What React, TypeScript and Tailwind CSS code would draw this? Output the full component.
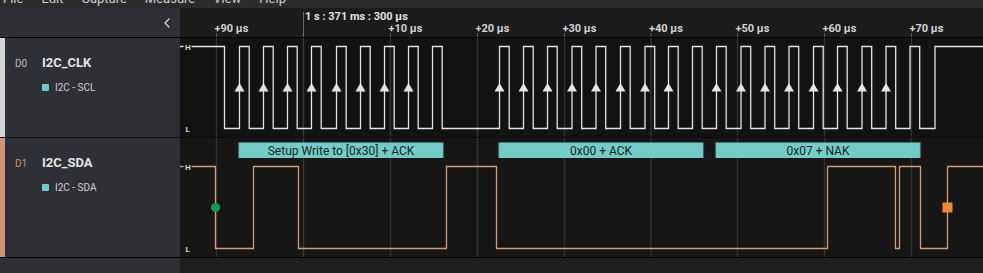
import { ChevronLeft } from "lucide-react";

const GRID = [216.5, 303.5, 390.5, 477.5, 564.5, 651, 737.5, 824.5, 911.5];

const TICKS = [
  { x: 216.5, label: "+90 µs" },
  { x: 390.5, label: "+10 µs" },
  { x: 477.5, label: "+20 µs" },
  { x: 564.5, label: "+30 µs" },
  { x: 651, label: "+40 µs" },
  { x: 737.5, label: "+50 µs" },
  { x: 824.5, label: "+60 µs" },
  { x: 911.5, label: "+70 µs" },
];

// rising edges of the clock, in page x
const CLK_RISE = [
  239.5, 263.5, 287.5, 311.5, 336.5, 360.5, 384.5, 408.5, 432.5,
  499.5, 523.5, 547.5, 572, 596, 620.5, 645, 668.5, 692.5,
  716.5, 741, 765, 789, 813.5, 837.5, 862, 886, 910, 935,
];
const NO_ARROW = [432.5, 692.5, 910, 935];

const CLK_HI = 46.5;
const CLK_LO = 128.5;
const SDA_HI = 166.5;
const SDA_LO = 248.5;

const clkPath = () => {
  let d = `M180 ${CLK_HI} H224.5 V${CLK_LO}`;
  CLK_RISE.forEach((x, i) => {
    d += ` H${x} V${CLK_HI}`;
    if (i < CLK_RISE.length - 1) d += ` H${x + 9.7} V${CLK_LO}`;
  });
  return d + " H983";
};

const SDA_EDGES = [215.5, 253.5, 298.5, 446.5, 496.5, 827.5, 895.5, 899.5, 920.5, 947.5];

const sdaPath = () => {
  let d = `M180 ${SDA_HI}`;
  SDA_EDGES.forEach((x, i) => {
    d += ` H${x} V${i % 2 === 0 ? SDA_LO : SDA_HI}`;
  });
  return d + " H983";
};

const ANNOTATIONS = [
  { x1: 238.5, x2: 443.5, text: "Setup Write to [0x30] + ACK" },
  { x1: 498.5, x2: 703.5, text: "0x00 + ACK" },
  { x1: 715.5, x2: 920.5, text: "0x07 + NAK" },
];

const GridLines = ({ y1, y2 }: { y1: number; y2: number }) => (
  <>
    {GRID.map((x) => (
      <line key={x} x1={x} x2={x} y1={y1} y2={y2} stroke={x === 303.5 ? "#3a3a3a" : "#313131"} strokeWidth={1.5} />
    ))}
  </>
);

const LevelLabels = ({ hi, lo, bg }: { hi: number; lo: number; bg: string }) => (
  <>
    <rect x={183.5} y={hi - 4} width={8} height={8} fill={bg} />
    <text x={185} y={hi + 3} fontSize={8} fontWeight={700} fill="#d8d8d8">H</text>
    <text x={185.5} y={lo + 3.5} fontSize={8} fontWeight={700} fill="#d8d8d8">L</text>
  </>
);

const Ruler = () => (
  <svg width={803} height={29} viewBox="180 8 803 29" className="block" fontFamily="Roboto, sans-serif">
    <line x1={303.5} x2={303.5} y1={12} y2={37} stroke="#6a6a6a" strokeWidth={1} />
    <text x={305} y={19.5} fontSize={11} fontWeight={700} fill="#e2e2e2">1 s : 371 ms : 300 µs</text>
    {TICKS.map((t) => (
      <g key={t.label}>
        <line x1={t.x} x2={t.x} y1={33} y2={37} stroke="#5a5a5a" strokeWidth={1} />
        <text x={t.x - 2} y={31.5} fontSize={11} fontWeight={700} fill="#d4d4d4">{t.label}</text>
      </g>
    ))}
  </svg>
);

const ClockTrace = () => (
  <svg width={803} height={99} viewBox="180 38 803 99" className="block" fontFamily="Roboto, sans-serif">
    <GridLines y1={38} y2={137} />
    <path d={clkPath()} fill="none" stroke="#e4e4e4" strokeWidth={1.3} />
    {CLK_RISE.filter((x) => !NO_ARROW.includes(x)).map((x) => (
      <polygon key={x} points={`${x},83 ${x - 5},91.5 ${x + 5},91.5`} fill="#e4e4e4" />
    ))}
    <LevelLabels hi={CLK_HI} lo={CLK_LO} bg="#121212" />
  </svg>
);

const DataTrace = () => (
  <svg width={803} height={119} viewBox="180 138 803 119" className="block" fontFamily="Roboto, sans-serif">
    <GridLines y1={138} y2={257} />
    {ANNOTATIONS.map((a) => (
      <g key={a.text}>
        <rect x={a.x1} y={142.5} width={a.x2 - a.x1} height={15.5} fill="#74ccc8" />
        <line x1={a.x1} x2={a.x1} y1={142.5} y2={158} stroke="#4f5a5a" strokeWidth={1.2} />
        <line x1={a.x2} x2={a.x2} y1={142.5} y2={158} stroke="#4f5a5a" strokeWidth={1.2} />
        <text x={(a.x1 + a.x2) / 2} y={154.5} textAnchor="middle" fontSize={12} fill="#1b2424">{a.text}</text>
      </g>
    ))}
    <path d={sdaPath()} fill="none" stroke="#d89a74" strokeWidth={1.3} />
    <circle cx={215.5} cy={207.5} r={4.6} fill="#0e9a4e" />
    <rect x={942.5} y={202.5} width={10} height={10} fill="#e98a38" />
    <LevelLabels hi={SDA_HI} lo={SDA_LO} bg="#161616" />
  </svg>
);

const ChannelLabel = ({
  index,
  name,
  analyzer,
  accent,
  indexColor,
  height,
}: {
  index: string;
  name: string;
  analyzer: string;
  accent: string;
  indexColor: string;
  height: string;
}) => (
  <div className={`flex ${height} bg-[#2f3035]`}>
    <div className={`w-[5px] shrink-0 ${accent}`} />
    <div className="pl-[10px] pt-[17px]">
      <div className="flex items-center h-[16px]">
        <span className={`w-[27px] text-[10px] ${indexColor}`}>{index}</span>
        <span className="text-[13px] font-bold text-[#e4e4e4]">{name}</span>
      </div>
      <div className="flex items-center h-[14px] mt-[9.5px] pl-[27px] gap-[6px]">
        <span className="w-[7px] h-[7px] rounded-[1px] bg-[#6fcbc7]" />
        <span className="text-[10px] text-[#cfcfcf]">{analyzer}</span>
      </div>
    </div>
  </div>
);

const App = () => {
  return (
    <div className="w-[983px] h-[273px] overflow-hidden bg-[#1e1e1e] font-['Roboto',sans-serif] select-none">
      {/* menu bar, scrolled mostly out of view */}
      <div className="h-[8px] overflow-hidden bg-[#2b2b2b]">
        <div className="flex gap-[18px] pl-[3px] -mt-[9px] text-[13px] leading-[16px] text-[#cfcfcf]">
          <span>File</span>
          <span>Edit</span>
          <span>Capture</span>
          <span>Measure</span>
          <span>View</span>
          <span>Help</span>
        </div>
      </div>

      <div className="grid grid-cols-[180px_803px]">
        {/* header */}
        <div className="h-[29px] bg-[#2f3035] flex items-center justify-end pr-[5px]">
          <ChevronLeft size={16} strokeWidth={2} className="text-[#d2d2d2]" />
        </div>
        <div className="h-[29px] bg-[#1b1b1b]">
          <Ruler />
        </div>
        <div className="col-span-2 h-px bg-black" />

        {/* channel 0 */}
        <ChannelLabel
          index="D0"
          name="I2C_CLK"
          analyzer="I2C - SCL"
          accent="bg-[#d4d4d4]"
          indexColor="text-[#b9b9b9]"
          height="h-[99px]"
        />
        <div className="h-[99px] bg-[#121212]">
          <ClockTrace />
        </div>
        <div className="col-span-2 h-px bg-[#0c0c0c]" />

        {/* channel 1 */}
        <ChannelLabel
          index="D1"
          name="I2C_SDA"
          analyzer="I2C - SDA"
          accent="bg-[#c9967a]"
          indexColor="text-[#c59272]"
          height="h-[119px]"
        />
        <div className="h-[119px] bg-[#161616]">
          <DataTrace />
        </div>
        <div className="col-span-2 h-px bg-black" />

        {/* empty space below channels */}
        <div className="h-[15px] bg-[#2f3035]" />
        <div className="h-[15px] bg-[#1e1e1e]" />
      </div>
    </div>
  );
};

export default App;
